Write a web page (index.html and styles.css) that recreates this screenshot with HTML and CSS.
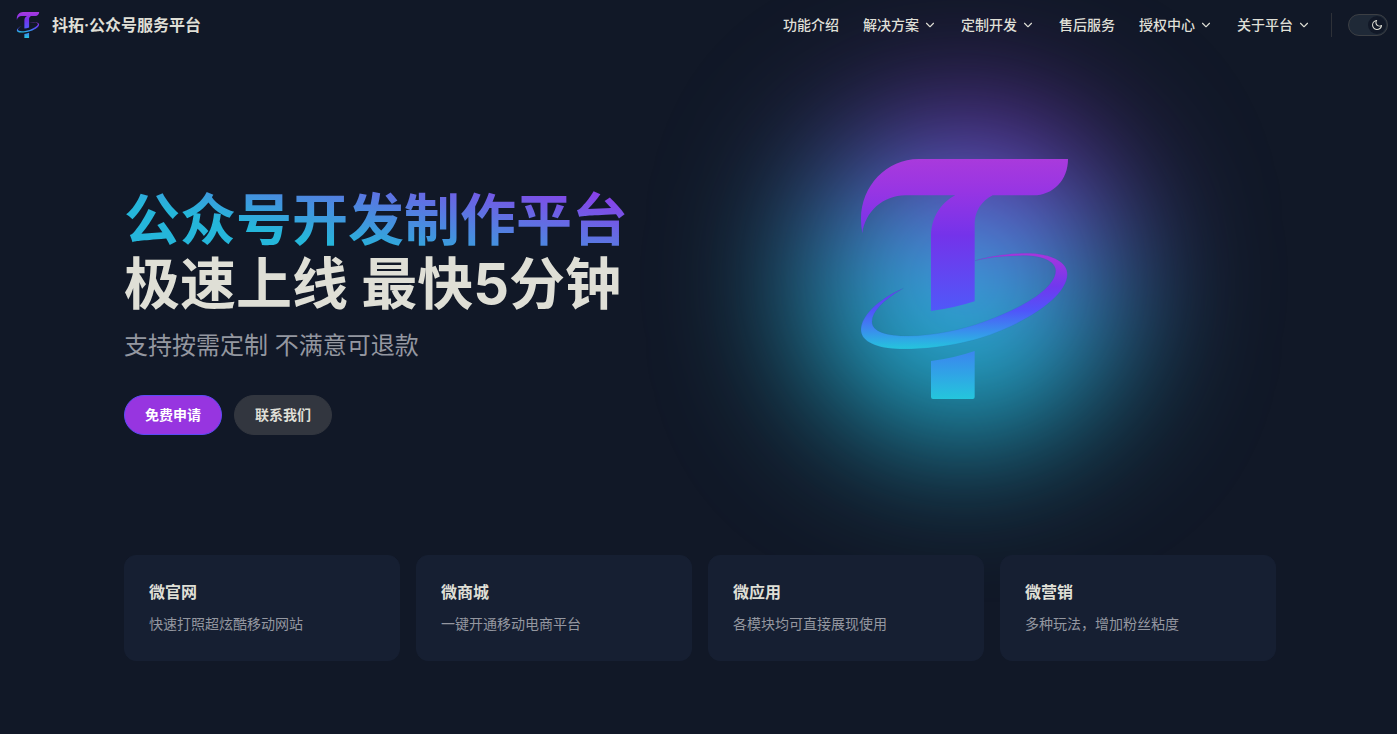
FILE: index.html
```html
<!DOCTYPE html>
<html lang="zh-CN">
<head>
    <meta charset="UTF-8">
    <meta name="viewport" content="width=device-width, initial-scale=1.0">
    <title>抖拓·公众号服务平台</title>
    <link rel="stylesheet" href="styles.css">
</head>
<body>

<!-- Shared shapes -->
<svg class="defs" width="0" height="0" aria-hidden="true">
    <defs>
        <linearGradient id="bodyFill" gradientUnits="userSpaceOnUse" x1="0" y1="57" x2="0" y2="777">
            <stop offset="0" stop-color="#a93adc"/>
            <stop offset="0.13" stop-color="#9835e3"/>
            <stop offset="0.32" stop-color="#7433ea"/>
            <stop offset="0.62" stop-color="#5157f8"/>
            <stop offset="0.81" stop-color="#3a88ee"/>
            <stop offset="1" stop-color="#24c6dc"/>
        </linearGradient>
        <linearGradient id="ringFill" gradientUnits="userSpaceOnUse" x1="0" y1="340" x2="0" y2="627">
            <stop offset="0" stop-color="#a935dc"/>
            <stop offset="0.35" stop-color="#7038ee"/>
            <stop offset="0.6" stop-color="#5055fa"/>
            <stop offset="0.8" stop-color="#3a8cee"/>
            <stop offset="1" stop-color="#24c6dc"/>
        </linearGradient>
        <symbol id="logo" viewBox="63 57 621 720">
            <path fill="url(#bodyFill)" d="M684 57H236C140 57 63 138 63 236Q63 260 67 280C75 215 130 166 196 166H346C300 190 273 235 273 290V513Q340 505 404 484V250C404 215 425 182 458 166H580C640 166 684 120 684 57Z"/>
            <path fill="url(#bodyFill)" d="M273 663Q340 655 404 633V771q0 6-6 6H279q-6 0-6-6Z"/>
            <path fill="url(#ringFill)" stroke="#2a5fa8" stroke-opacity="0.4" stroke-width="1" d="M405 362C450 347 520 339 570 340C640 343 682 368 682 402C682 480 520 568 400 600C320 621 240 628 180 627C110 626 63 604 63 570C63 530 110 480 190 445C130 480 96 515 96 545C96 575 140 588 205 588C280 588 370 568 430 546C560 500 647 440 647 392C647 362 600 345 540 347C490 347 445 352 405 362Z"/>
        </symbol>
        <symbol id="chevron" viewBox="0 0 24 24">
            <path fill="currentColor" d="M12 16c-.3 0-.5-.1-.7-.3l-6-6c-.4-.4-.4-1 0-1.4s1-.4 1.4 0l5.300 5.300 5.300-5.300c.4-.4 1-.4 1.400 0s.4 1 0 1.400l-6 6c-.2.2-.4.3-.7.3z"/>
        </symbol>
    </defs>
</svg>

<header class="nav">
    <a class="brand" href="#">
        <svg class="brand-logo" aria-hidden="true"><use href="#logo"/></svg>
        <span>抖拓·公众号服务平台</span>
    </a>
    <nav class="menu">
        <a class="menu-item" href="#">功能介绍</a>
        <button class="menu-item" type="button">解决方案<svg class="chevron" aria-hidden="true"><use href="#chevron"/></svg></button>
        <button class="menu-item" type="button">定制开发<svg class="chevron" aria-hidden="true"><use href="#chevron"/></svg></button>
        <a class="menu-item" href="#">售后服务</a>
        <button class="menu-item" type="button">授权中心<svg class="chevron" aria-hidden="true"><use href="#chevron"/></svg></button>
        <button class="menu-item" type="button">关于平台<svg class="chevron" aria-hidden="true"><use href="#chevron"/></svg></button>
    </nav>
    <div class="appearance">
        <button class="switch" type="button" role="switch" aria-checked="true" aria-label="切换深色模式">
            <span class="switch-knob">
                <svg viewBox="0 0 24 24" width="12" height="12" aria-hidden="true">
                    <path fill="currentColor" d="M12.1 22c-.3 0-.6 0-.9 0-5.500-.5-9.500-5.400-9-10.900.4-4.800 4.200-8.600 9-9 .4 0 .8.2 1 .5.2.3.2.8-.1 1.100-2 2.700-1.400 6.400 1.300 8.400 2.100 1.600 5 1.600 7.100 0 .3-.2.7-.3 1.100-.1.3.2.5.6.5 1-.2 2.700-1.500 5.100-3.600 6.800-1.900 1.400-4.100 2.200-6.400 2.200zM9.300 4.400c-2.900 1-5 3.600-5.200 6.800-.4 4.400 2.800 8.300 7.200 8.700 2.100.2 4.200-.4 5.800-1.800 1.100-.9 1.900-2.100 2.400-3.400-2.500.9-5.300.5-7.500-1.100-2.800-2.200-3.900-5.900-2.700-9.200z"/>
                </svg>
            </span>
        </button>
    </div>
</header>

<main class="home">
    <section class="hero">
        <div class="hero-main">
            <h1 class="hero-title">
                <span class="name">公众号开发制作平台</span>
                <span class="text">极速上线 最快5分钟</span>
            </h1>
            <p class="tagline">支持按需定制 不满意可退款</p>
            <div class="actions">
                <a class="btn btn-brand" href="#">免费申请</a>
                <a class="btn btn-alt" href="#">联系我们</a>
            </div>
        </div>
        <div class="hero-image">
            <svg class="hero-logo" role="img" aria-label="抖拓"><use href="#logo"/></svg>
        </div>
    </section>

    <section class="features">
        <article class="card">
            <h2>微官网</h2>
            <p>快速打照超炫酷移动网站</p>
        </article>
        <article class="card">
            <h2>微商城</h2>
            <p>一键开通移动电商平台</p>
        </article>
        <article class="card">
            <h2>微应用</h2>
            <p>各模块均可直接展现使用</p>
        </article>
        <article class="card">
            <h2>微营销</h2>
            <p>多种玩法，增加粉丝粘度</p>
        </article>
    </section>
</main>

</body>
</html>
```
FILE: styles.css
```css
* { box-sizing: border-box; }

body {
    margin: 0;
    min-height: 100vh;
    overflow-x: hidden;
    background-color: #111827;
    color: #dfdfd6;
    font-family: Inter, "Noto Sans CJK SC", sans-serif;
    font-size: 14px;
    line-height: 24px;
}

h1, h2, p { margin: 0; }
a { color: inherit; text-decoration: none; }
button { font: inherit; color: inherit; cursor: pointer; }
.defs { position: absolute; }

/* Nav */
.nav { position: relative; z-index: 2; display: flex; align-items: center; height: 50px; padding: 0 9px 0 16px; }
.brand { display: flex; align-items: center; gap: 12px; margin-right: auto; font-size: 16px; font-weight: 600; }
.brand-logo { width: 24px; height: 26px; }
.menu { display: flex; }
.menu-item { display: flex; align-items: center; gap: 4px; padding: 0 12px; border: 0; background: none; font-weight: 500; }
.chevron { width: 14px; height: 14px; }
.appearance { display: flex; align-items: center; height: 24px; margin-left: 8px; padding-left: 16px; border-left: 1px solid #2e3138; }
.switch { display: flex; justify-content: flex-end; width: 40px; height: 22px; padding: 1px; border: 1px solid #3c3f44; border-radius: 11px; background-color: #1f2937; }
.switch-knob { display: flex; align-items: center; justify-content: center; width: 18px; height: 18px; border-radius: 50%; background-color: #111827; }

/* Hero */
.home { padding: 0 61px 48px 64px; }
.hero { display: flex; max-width: 1152px; margin: 0 auto; padding-top: 109px; }
.hero-main { position: relative; z-index: 1; flex: 1; padding-top: 29px; }
.hero-title { font-size: 56px; line-height: 64px; font-weight: 700; }
.hero-title span { display: block; width: fit-content; }
.name {
    background: linear-gradient(12deg, #25b6da 30%, #9333ea 100%);
    -webkit-background-clip: text;
    background-clip: text;
    color: transparent;
}
.tagline { padding-top: 12px; font-size: 24px; line-height: 36px; color: #9497a0; }
.actions { display: flex; gap: 12px; padding-top: 31px; }
.btn { padding: 0 20px; border: 1px solid transparent; border-radius: 20px; line-height: 38px; font-weight: 600; }
.btn-brand { border-color: #5b4bf5; background-color: #9735e0; color: #fff; }
.btn-alt { background-color: #32363f; border-color: #32363f; }

.hero-image { position: relative; display: flex; justify-content: center; width: 560px; height: 240px; padding-right: 63px; }
.hero-image::before {
    content: "";
    position: absolute;
    top: -40px;
    left: 88px;
    width: 320px;
    height: 320px;
    border-radius: 50%;
    background: linear-gradient(14deg, #22b8d9 45%, #8b35d8 80%);
    filter: blur(72px);
}
.hero-logo { position: relative; width: 207px; height: 240px; }

/* Features */
.features { position: relative; display: grid; grid-template-columns: repeat(4, 1fr); gap: 16px; max-width: 1152px; margin: 120px auto 0; }
.card { padding: 24px; border: 1px solid #161f32; border-radius: 12px; background-color: #161f32; }
.card h2 { font-size: 16px; line-height: 24px; font-weight: 600; }
.card p { padding-top: 8px; color: #9497a0; }

@media (max-width: 960px) {
    .home { padding: 0 24px 48px; }
    .hero { flex-direction: column-reverse; align-items: center; padding-top: 48px; }
    .hero-image { width: 100%; padding-right: 0; }
    .hero-image::before { left: calc(50% - 160px); }
    .features { grid-template-columns: repeat(2, 1fr); margin-top: 64px; }
    .menu { display: none; }
}
```
